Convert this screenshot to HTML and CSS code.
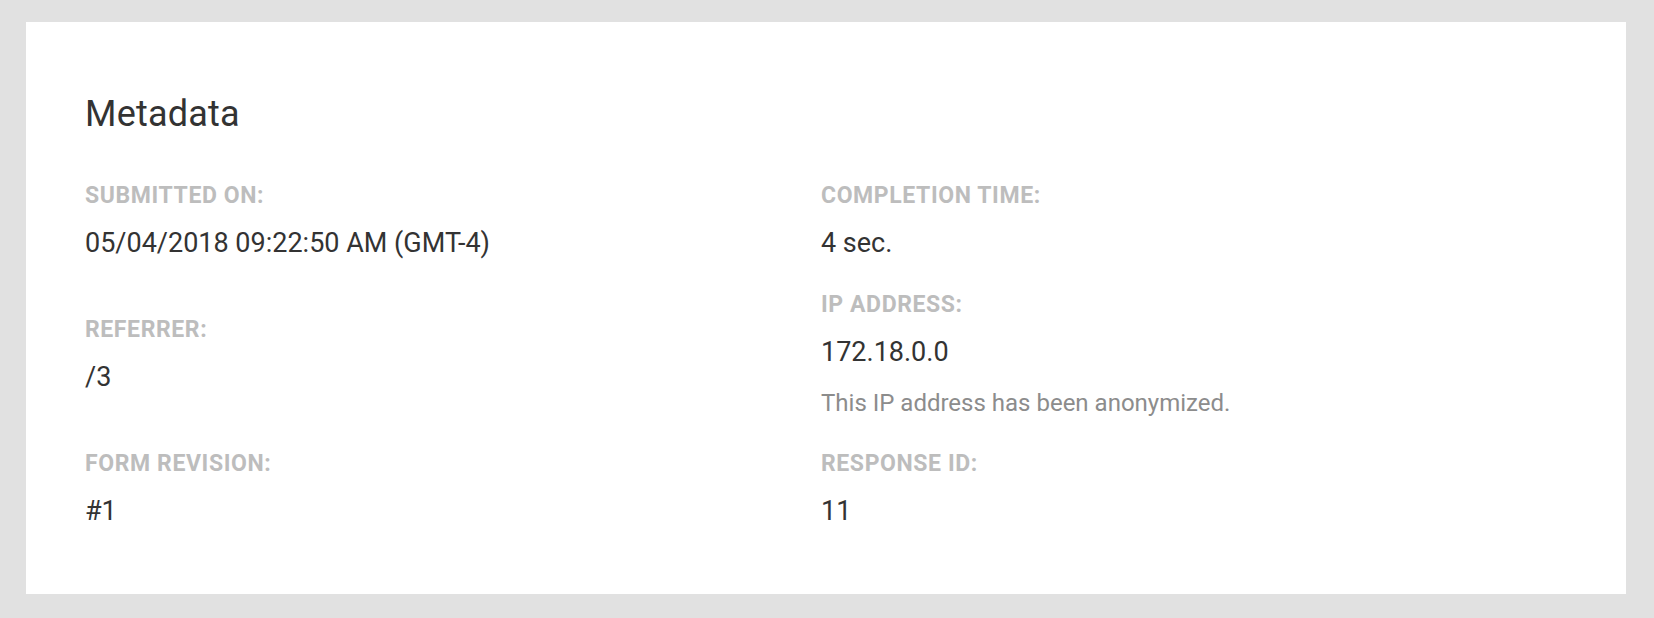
FILE: index.html
```html
<!DOCTYPE html>
<html lang="en">
<head>
<meta charset="utf-8">
<title>Metadata</title>
<link rel="stylesheet" href="styles.css">
</head>
<body>
<section class="card">
  <h2 class="title">Metadata</h2>
  <div class="grid">
    <div class="col col-spread">
      <div class="item">
        <div class="label">SUBMITTED ON:</div>
        <div class="value">05/04/2018 09:22:50 AM (GMT-4)</div>
      </div>
      <div class="item">
        <div class="label">REFERRER:</div>
        <div class="value">/3</div>
      </div>
      <div class="item">
        <div class="label">FORM REVISION:</div>
        <div class="value">#1</div>
      </div>
    </div>
    <div class="col col-stack">
      <div class="item">
        <div class="label">COMPLETION TIME:</div>
        <div class="value">4 sec.</div>
      </div>
      <div class="item">
        <div class="label">IP ADDRESS:</div>
        <div class="value">172.18.0.0</div>
        <div class="note">This IP address has been anonymized.</div>
      </div>
      <div class="item">
        <div class="label">RESPONSE ID:</div>
        <div class="value">11</div>
      </div>
    </div>
  </div>
</section>
</body>
</html>
```

FILE: styles.css
```css
html, body {
  margin: 0;
  padding: 0;
}
body {
  background: #e1e1e1;
  font-family: Roboto, "Liberation Sans", Arial, sans-serif;
  color: #333333;
  padding: 22px 28px 24px 26px;
}
.card {
  background: #ffffff;
  padding: 72px 59px 64px 59px;
  height: 572px;
  box-sizing: border-box;
}
.title {
  margin: 0 0 47px 0;
  font-size: 36px;
  line-height: 40px;
  font-weight: 400;
  color: #333333;
  letter-spacing: 0.2px;
}
.grid {
  display: grid;
  grid-template-columns: 736px 1fr;
}
.col {
  display: flex;
  flex-direction: column;
}
.col-spread {
  justify-content: space-between;
}
.col-stack {
  gap: 29px;
}
.label {
  font-size: 23px;
  line-height: 30px;
  font-weight: 700;
  color: #bdbdbd;
  letter-spacing: 0.6px;
}
.value {
  margin-top: 14px;
  font-size: 27px;
  line-height: 36px;
  color: #333333;
}
.note {
  margin-top: 16px;
  font-size: 24px;
  line-height: 34px;
  color: #8c8c8c;
}
```
